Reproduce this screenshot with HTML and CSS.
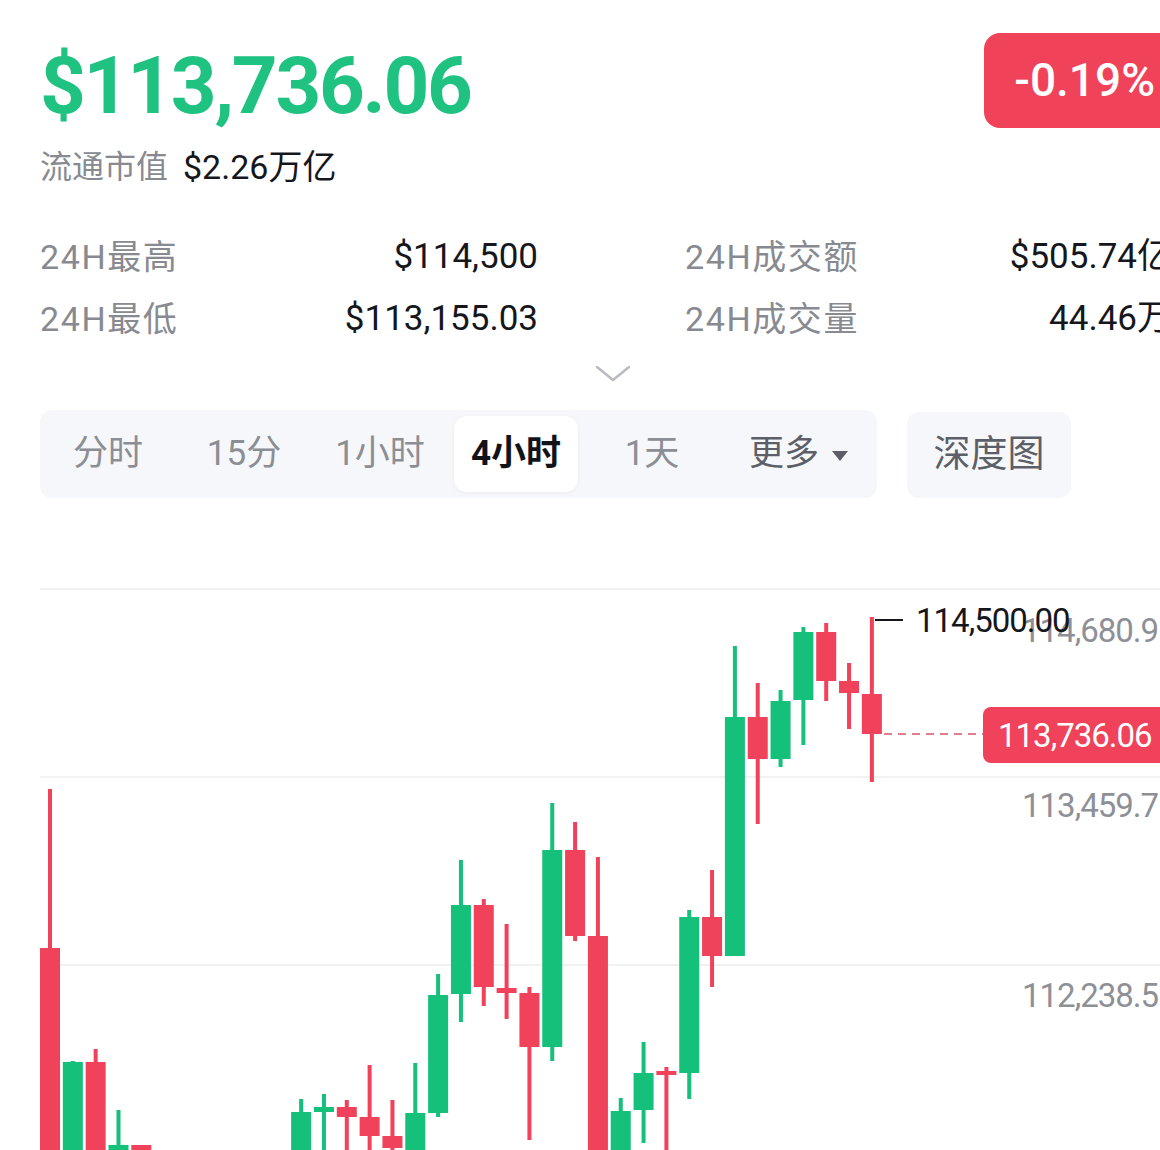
FILE: index.html
```html
<!DOCTYPE html>
<html lang="zh-CN">
<head>
  <meta charset="UTF-8">
  <meta name="viewport" content="width=device-width, initial-scale=1.0">
  <title>BTC 行情</title>
  <link rel="stylesheet" href="styles.css">
</head>
<body>
  <div class="page">
    <div class="head">
      <div>
        <div class="price">$113,736.06</div>
        <div class="cap">
          <span class="cap-label">流通市值</span>
          <span class="cap-value">$2.26万亿</span>
        </div>
      </div>
      <div class="change">-0.19%</div>
    </div>

    <div class="stats">
      <div class="stat"><span class="stat-label">24H最高</span><span class="stat-value">$114,500</span></div>
      <div class="stat"><span class="stat-label">24H成交额</span><span class="stat-value">$505.74亿</span></div>
      <div class="stat"><span class="stat-label">24H最低</span><span class="stat-value">$113,155.03</span></div>
      <div class="stat"><span class="stat-label">24H成交量</span><span class="stat-value">44.46万</span></div>
    </div>

    <div class="expand">
      <svg width="36" height="18" viewBox="0 0 36 18"><polyline points="2,2 18,15 34,2" fill="none" stroke="#b8bbc1" stroke-width="2.5" stroke-linecap="round" stroke-linejoin="round"/></svg>
    </div>

    <div class="toolbar">
      <div class="tabs">
        <div class="tab">分时</div>
        <div class="tab">15分</div>
        <div class="tab">1小时</div>
        <div class="tab active">4小时</div>
        <div class="tab">1天</div>
        <div class="tab tab-more">更多<span class="caret"></span></div>
      </div>
      <div class="depth-btn">深度图</div>
    </div>

    <div class="chart">
      <svg id="kline" width="1212" height="590" viewBox="0 560 1212 590">
        <g id="grid">
          <line x1="40" y1="589" x2="1212" y2="589"/>
          <line x1="40" y1="777" x2="1212" y2="777"/>
          <line x1="40" y1="965" x2="1212" y2="965"/>
        </g>
        <g id="candles"></g>
        <text class="axis-label" x="1022" y="642">114,680.9</text>
        <text class="axis-label" x="1022" y="817">113,459.7</text>
        <text class="axis-label" x="1022" y="1007">112,238.5</text>
        <line class="max-line" x1="875" y1="620" x2="903" y2="620"/>
        <text class="max-label" x="916" y="632">114,500.00</text>
        <line class="last-line" x1="884" y1="734" x2="983" y2="734"/>
        <rect class="last-tag" x="983" y="707" width="240" height="56" rx="8"/>
        <text class="last-label" x="998" y="747">113,736.06</text>
      </svg>
    </div>
  </div>

  <script>
    // [index, up?, high, bodyTop, bodyBottom, low] in chart pixels
    const candles = [
      [0, 0, 789, 948, 1200, 1200],
      [1, 1, 1061, 1062, 1200, 1200],
      [2, 0, 1049, 1062, 1200, 1200],
      [3, 1, 1110, 1145, 1200, 1200],
      [4, 0, 1145, 1145, 1200, 1200],
      [11, 1, 1099, 1112, 1200, 1200],
      [12, 1, 1094, 1107, 1112, 1200],
      [13, 0, 1100, 1107, 1117, 1200],
      [14, 0, 1065, 1117, 1136, 1200],
      [15, 0, 1100, 1136, 1148, 1200],
      [16, 1, 1063, 1113, 1200, 1200],
      [17, 1, 974, 995, 1113, 1117],
      [18, 1, 860, 905, 994, 1022],
      [19, 0, 899, 905, 987, 1006],
      [20, 0, 924, 988, 993, 1019],
      [21, 0, 987, 993, 1047, 1140],
      [22, 1, 803, 850, 1047, 1061],
      [23, 0, 822, 850, 936, 941],
      [24, 0, 857, 936, 1200, 1200],
      [25, 1, 1098, 1111, 1200, 1200],
      [26, 1, 1042, 1073, 1110, 1143],
      [27, 0, 1067, 1071, 1075, 1200],
      [28, 1, 910, 917, 1073, 1099],
      [29, 0, 870, 917, 956, 987],
      [30, 1, 646, 717, 956, 956],
      [31, 0, 683, 717, 759, 824],
      [32, 1, 690, 701, 759, 767],
      [33, 1, 627, 632, 700, 745],
      [34, 0, 623, 632, 681, 701],
      [35, 0, 663, 681, 693, 729],
      [36, 0, 617, 694, 734, 782]
    ];

    const ns = 'http://www.w3.org/2000/svg';
    const group = document.getElementById('candles');

    function bar(x, y, w, h, cls) {
      const r = document.createElementNS(ns, 'rect');
      r.setAttribute('x', x);
      r.setAttribute('y', y);
      r.setAttribute('width', w);
      r.setAttribute('height', h);
      r.setAttribute('class', cls);
      group.appendChild(r);
    }

    candles.forEach(([i, up, high, top, bottom, low]) => {
      const cx = 50 + i * 22.83;
      const cls = up ? 'up' : 'down';
      bar(cx - 2, high, 4, low - high, cls);
      bar(cx - 10, top, 20, Math.max(bottom - top, 4), cls);
    });
  </script>
</body>
</html>
```

FILE: styles.css
```css
html, body { margin: 0; padding: 0; overflow: hidden; background: #fff; }
body { font-family: Roboto, "Noto Sans CJK SC", sans-serif; color: #15171c; }
.page { width: 1145px; padding: 0 0 0 40px; }

.head { display: flex; justify-content: space-between; align-items: flex-start; }
.price { margin-top: 38px; font-size: 80px; line-height: 96px; font-weight: 700; color: #1fc281; letter-spacing: -2.3px; }
.cap { margin-top: 13px; height: 40px; line-height: 40px; font-size: 32px; display: flex; gap: 15px; }
.cap-label { color: #878a90; }
.cap-value { color: #15171c; font-size: 34px; }
.change { margin-top: 33px; height: 95px; line-height: 95px; padding: 0 30px; background: #f0435a; color: #fff; border-radius: 16px; font-size: 46px; font-weight: 500; }

.stats { margin-top: 39px; display: grid; grid-template-columns: 498px 487px; column-gap: 147px; }
.stat { display: flex; justify-content: space-between; height: 62px; line-height: 62px; font-size: 34px; }
.stat-label { color: #878a90; letter-spacing: 1.6px; }
.stat-value { color: #15171c; font-size: 35px; }

.expand { margin-top: 15px; height: 17px; padding-left: 555px; }
.expand svg { display: block; }

.toolbar { margin-top: 28px; display: flex; gap: 30px; }
.tabs { display: flex; width: 837px; height: 88px; padding: 6px 0; box-sizing: border-box; background: #f5f7fa; border-radius: 12px; }
.tab { width: 124px; margin: 0 6px; height: 76px; line-height: 76px; text-align: center; font-size: 35px; color: #8b8e94; border-radius: 13px; }
.tab.active { background: #fff; color: #111318; font-weight: 700; box-shadow: 0 1px 4px #0000000d; }
.tab-more { flex: 1; color: #5c5f67; }
.caret { display: inline-block; margin-left: 13px; vertical-align: middle; border-left: 8px solid transparent; border-right: 8px solid transparent; border-top: 10px solid #5c5f67; }
.depth-btn { width: 164px; height: 86px; margin-top: 2px; line-height: 86px; text-align: center; font-size: 37px; color: #5c5f67; background: #f5f7fa; border-radius: 12px; }

.chart { margin: 62px 0 0 -40px; }
.chart svg { display: block; }
#grid line { stroke: #ececec; stroke-width: 1.5; }
.up { fill: #14c07a; }
.down { fill: #f0425a; }
.axis-label { font-size: 33px; letter-spacing: -1px; fill: #8d9096; }
.max-line { stroke: #15171c; stroke-width: 2; }
.max-label { font-size: 33px; letter-spacing: -1px; fill: #15171c; }
.last-line { stroke: #d9566b; stroke-width: 1.5; stroke-dasharray: 8 6; }
.last-tag { fill: #f0425a; }
.last-label { font-size: 33px; letter-spacing: -1px; fill: #fff; }
```
